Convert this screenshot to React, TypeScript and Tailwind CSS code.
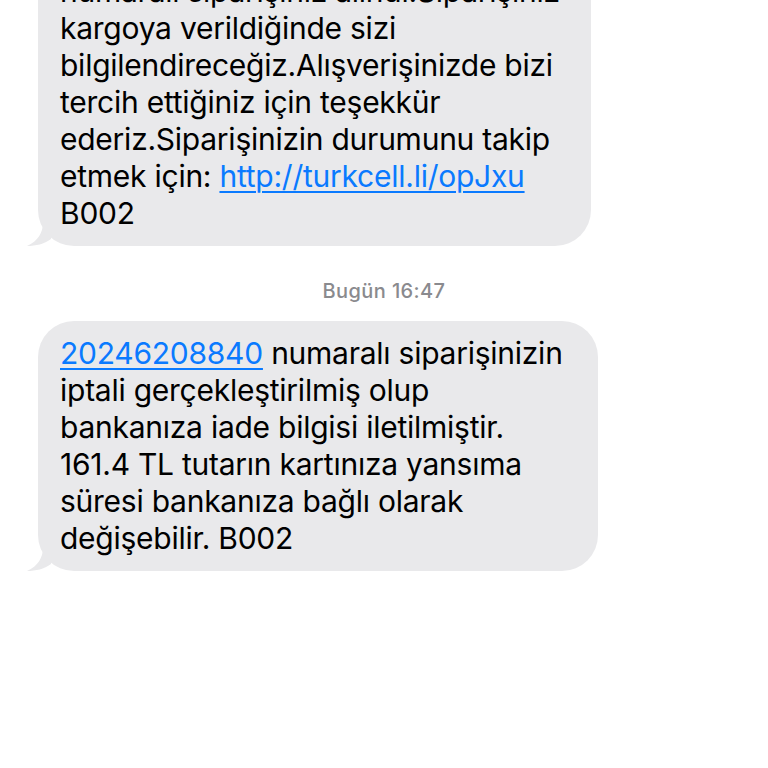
import React from "react";

const Tail = () => (
  <svg
    className="absolute left-[-11px] bottom-0"
    width="26"
    height="24"
    viewBox="0 0 26 24"
  >
    <path d="M 16 0 C 16 11 11 19 0 24 C 9 24 17 22 24 17 L 26 0 Z" fill="#e9e9eb" />
  </svg>
);

const Link = ({ children }: { children: React.ReactNode }) => (
  <span className="text-[#0a7aff] underline decoration-[1.5px] underline-offset-[4px]">{children}</span>
);

export default function App() {
  return (
    <div
      className="w-[768px] h-[768px] overflow-hidden bg-white flex flex-col"
      style={{ fontFamily: "Inter, 'Noto Sans', sans-serif" }}
    >
      <div className="pl-[38px] flex flex-col items-start">
        <div className="relative mt-[-41px] w-[553px] rounded-[36px] bg-[#e9e9eb] px-[22px] py-[14px] text-[30px] leading-[37px] tracking-[-0.25px] text-black">
          <div className="whitespace-nowrap">numaralı siparişiniz alındı.Siparişiniz</div>
          <div className="whitespace-nowrap">kargoya verildiğinde sizi</div>
          <div className="whitespace-nowrap">bilgilendireceğiz.Alışverişinizde bizi</div>
          <div className="whitespace-nowrap">tercih ettiğiniz için teşekkür</div>
          <div className="whitespace-nowrap">ederiz.Siparişinizin durumunu takip</div>
          <div className="whitespace-nowrap">
            etmek için: <Link>http://turkcell.li/opJxu</Link>
          </div>
          <div className="whitespace-nowrap">B002</div>
          <Tail />
        </div>
      </div>

      <div className="mt-[34px] text-center text-[20px] leading-[23px] font-medium tracking-[0.4px] text-[#8a8a8e]">
        Bugün 16:47
      </div>

      <div className="pl-[38px] flex flex-col items-start mt-[18px]">
        <div className="relative w-[560px] rounded-[36px] bg-[#e9e9eb] px-[22px] py-[14px] text-[30px] leading-[37px] tracking-[-0.25px] text-black">
          <div className="whitespace-nowrap">
            <Link>20246208840</Link> numaralı siparişinizin
          </div>
          <div className="whitespace-nowrap">iptali gerçekleştirilmiş olup</div>
          <div className="whitespace-nowrap">bankanıza iade bilgisi iletilmiştir.</div>
          <div className="whitespace-nowrap">161.4 TL tutarın kartınıza yansıma</div>
          <div className="whitespace-nowrap">süresi bankanıza bağlı olarak</div>
          <div className="whitespace-nowrap">değişebilir. B002</div>
          <Tail />
        </div>
      </div>
    </div>
  );
}
